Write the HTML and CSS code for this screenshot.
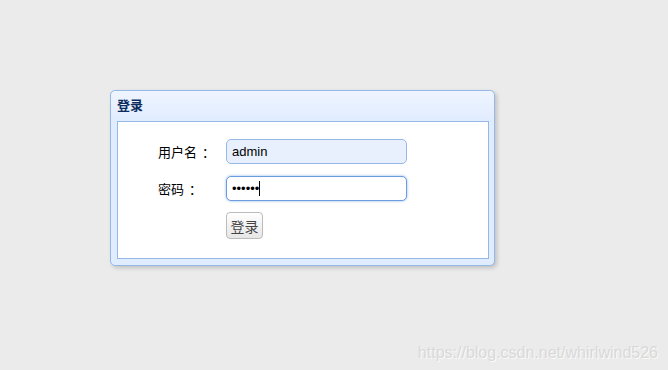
FILE: index.html
```html
<!DOCTYPE html>
<html lang="zh-CN">
<head>
    <meta charset="UTF-8">
    <meta name="viewport" content="width=device-width, initial-scale=1.0">
    <title>登录</title>
    <link rel="stylesheet" href="styles.css">
</head>
<body>
    <div class="panel">
        <div class="panel-header">
            <span class="panel-title">登录</span>
        </div>
        <div class="panel-body">
            <form class="login-form">
                <label class="form-label" for="username">用户名<span class="colon">：</span></label>
                <input class="form-input autofill" type="text" id="username" value="admin">
                <label class="form-label" for="password">密码<span class="colon">：</span></label>
                <div class="input-wrap">
                    <input class="form-input focused" type="password" id="password" value="123456">
                    <span class="caret"></span>
                </div>
                <span></span>
                <div class="btn-row"><button class="btn" type="button">登录</button></div>
            </form>
        </div>
    </div>
    <div class="watermark">https://blog.csdn.net/whirlwind526</div>
</body>
</html>
```

FILE: styles.css
```css
body {
    margin: 0;
    padding: 90px 0 0 110px;
    background-color: #ebebeb;
    font-family: "Liberation Sans", "Noto Sans CJK SC", sans-serif;
    font-size: 13px;
    color: #000;
    height: 370px;
    box-sizing: border-box;
    overflow: hidden;
}
.panel {
    width: 385px;
    box-sizing: border-box;
    border: 1px solid #95b8e7;
    border-radius: 5px;
    background-color: #e0ecff;
    box-shadow: 2px 2px 4px rgba(0, 0, 0, 0.18);
    padding-bottom: 6px;
}
.panel-header {
    height: 30px;
    padding: 0 6px 2px;
    box-sizing: border-box;
    display: flex;
    align-items: center;
    background: linear-gradient(to bottom, #eff5ff, #e0ecff);
    border-radius: 5px 5px 0 0;
}
.panel-title {
    font-family: "Noto Sans CJK SC", sans-serif;
    font-size: 13px;
    font-weight: bold;
    color: #0e2d5f;
    line-height: 16px;
}
.panel-body {
    margin: 0 5px 0 6px;
    height: 138px;
    box-sizing: border-box;
    border: 1px solid #95b8e7;
    background-color: #fff;
    padding: 17px 0 0 40px;
}
.login-form {
    display: grid;
    grid-template-columns: 68px 181px;
    row-gap: 12px;
    align-items: center;
}
.form-label {
    font-family: "Noto Sans CJK SC", sans-serif;
    font-size: 13px;
    color: #000;
}
.colon {
    margin-left: 5px;
}
.input-wrap {
    position: relative;
    height: 25px;
}
.form-input {
    display: block;
    width: 181px;
    height: 25px;
    box-sizing: border-box;
    border: 1px solid #95b8e7;
    border-radius: 5px;
    padding: 0 5px;
    font-family: "Liberation Sans", sans-serif;
    font-size: 13px;
    color: #000;
    background-color: #fff;
    outline: none;
}
.form-input.autofill {
    background-color: #e8f0fe;
}
.form-input.focused {
    border-color: #6b9cde;
    box-shadow: 0 0 3px 0 #95b8e7;
}
.caret {
    position: absolute;
    left: 33px;
    top: 5px;
    width: 1px;
    height: 15px;
    background-color: #000;
}
.btn-row {
    margin-top: -1px;
}
.btn {
    width: 37px;
    height: 27px;
    padding: 0;
    border: 1px solid #bbb;
    border-radius: 4px;
    background: linear-gradient(to bottom, #ffffff, #e6e6e6);
    font-family: "Noto Sans CJK SC", sans-serif;
    font-size: 14px;
    color: #444;
}
.watermark {
    position: absolute;
    right: 10px;
    bottom: 8px;
    font-family: "Liberation Sans", sans-serif;
    font-size: 16px;
    color: #d9d9d9;
    text-shadow: 1px 1px 0 #fafafa;
}
```
